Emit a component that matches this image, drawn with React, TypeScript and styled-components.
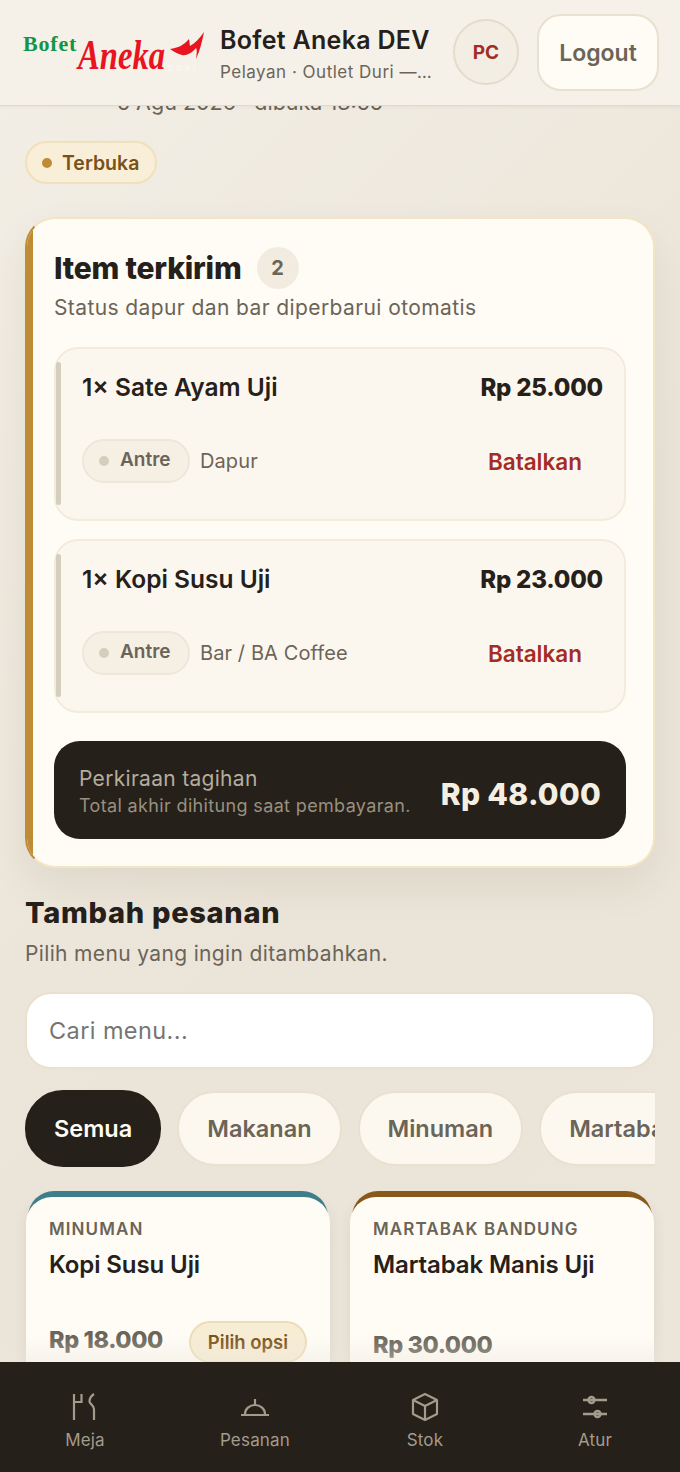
import React from "react";
import styled, { createGlobalStyle } from "styled-components";

const items = [
  { id: 1, name: "1× Sate Ayam Uji", price: "Rp 25.000", station: "Dapur" },
  { id: 2, name: "1× Kopi Susu Uji", price: "Rp 23.000", station: "Bar / BA Coffee" },
];

const filters = ["Semua", "Makanan", "Minuman", "Martabak Bandung"];

const GlobalStyle = createGlobalStyle`
  * { box-sizing: border-box; }
  html, body { margin: 0; padding: 0; }
  body { font-family: Inter, "Liberation Sans", sans-serif; color: #26201a; }
`;

function Logo() {
  return (
    <LogoSvg viewBox="0 0 182 56" width="182" height="56">
      <text x="1" y="23" fontFamily="Liberation Serif" fontWeight="700" fontSize="22" letterSpacing="0.8" fill="#149447">
        Bofet
      </text>
      <text
        transform="translate(56 41) scale(0.777 1)"
        fontFamily="Liberation Serif"
        fontStyle="italic"
        fontWeight="700"
        fontSize="42"
        fill="#e8141f"
      >
        Aneka
      </text>
      <path d="M148 21C156 20 162 17 167 11L168 18C173 15 178 10 182 4C180 14 178 22 174 31C175 24 175 22 174 20C170 25 164 28 160 27C156 26 152 24 148 21Z" fill="#e8141f" />
      <text x="146" y="43" fontFamily="Inter" fontSize="7" letterSpacing="3.5" fill="#fbfaf6">
        DURI
      </text>
    </LogoSvg>
  );
}

function MejaIcon() {
  return (
    <svg viewBox="0 0 26 28" width="26" height="28" fill="none" stroke="currentColor" strokeWidth="2.2">
      <path d="M2 1v26M2 9h7.5V1" />
      <path d="M22 1c-3 2-4.500 5-4.500 7.500S22 12 22 16v11" />
    </svg>
  );
}

function PesananIcon() {
  return (
    <svg viewBox="0 0 30 20" width="30" height="20" fill="none" stroke="currentColor" strokeWidth="2.2">
      <path d="M1 18h28M5 17c0-5 4.500-9 10-9s10 4 10 9" />
      <path d="M15 2v6" />
    </svg>
  );
}

function StokIcon() {
  return (
    <svg viewBox="0 0 30 30" width="30" height="30" fill="none" stroke="currentColor" strokeWidth="2.2" strokeLinejoin="round">
      <path d="M15 2l12 6v14l-12 6-12-6V8z" />
      <path d="M3 8l12 6 12-6M15 14v14" />
    </svg>
  );
}

function AturIcon() {
  return (
    <svg viewBox="0 0 26 24" width="26" height="24" fill="none" stroke="currentColor" strokeWidth="2.4">
      <path d="M1 5h24M1 19h24" />
      <circle cx="9.500" cy="5" r="3" />
      <circle cx="15.500" cy="19" r="3" />
    </svg>
  );
}

export default function App() {
  return (
    <Screen>
      <GlobalStyle />
      <Header>
        <Logo />
        <HeaderText>
          <BrandName>Bofet Aneka DEV</BrandName>
          <BrandSub>Pelayan · Outlet Duri — Jakarta</BrandSub>
        </HeaderText>
        <Avatar>PC</Avatar>
        <LogoutButton>Logout</LogoutButton>
      </Header>

      <Content>
        <OpenedAt>5 Agu 2026 · dibuka 13:55</OpenedAt>
        <StatusPill>
          <StatusDot />
          Terbuka
        </StatusPill>

        <SentCard>
          <CardTitleRow>
            <CardTitle>Item terkirim</CardTitle>
            <CountBadge>2</CountBadge>
          </CardTitleRow>
          <CardSub>Status dapur dan bar diperbarui otomatis</CardSub>

          <ItemList>
            {items.map((item) => (
              <ItemRow key={item.id}>
                <ItemTop>
                  <ItemName>{item.name}</ItemName>
                  <ItemPrice>{item.price}</ItemPrice>
                </ItemTop>
                <ItemBottom>
                  <QueuePill>
                    <QueueDot />
                    Antre
                  </QueuePill>
                  <Station>{item.station}</Station>
                  <CancelLink>Batalkan</CancelLink>
                </ItemBottom>
              </ItemRow>
            ))}
          </ItemList>

          <BillBar>
            <BillText>
              <BillLabel>Perkiraan tagihan</BillLabel>
              <BillNote>Total akhir dihitung saat pembayaran.</BillNote>
            </BillText>
            <BillTotal>Rp 48.000</BillTotal>
          </BillBar>
        </SentCard>

        <SectionTitle>Tambah pesanan</SectionTitle>
        <SectionSub>Pilih menu yang ingin ditambahkan.</SectionSub>

        <SearchInput placeholder="Cari menu..." />

        <FilterRow>
          {filters.map((f, i) => (
            <FilterChip key={f} $active={i === 0}>
              {f}
            </FilterChip>
          ))}
        </FilterRow>

        <MenuGrid>
          <MenuCard $accent="#3f7f8c">
            <MenuCategory>MINUMAN</MenuCategory>
            <MenuName>Kopi Susu Uji</MenuName>
            <MenuFoot>
              <MenuPrice>Rp 18.000</MenuPrice>
              <OptionButton>Pilih opsi</OptionButton>
            </MenuFoot>
          </MenuCard>
          <MenuCard $accent="#8a5a1c">
            <MenuCategory>MARTABAK BANDUNG</MenuCategory>
            <MenuName>Martabak Manis Uji</MenuName>
            <MenuFoot $plain>
              <MenuPrice>Rp 30.000</MenuPrice>
            </MenuFoot>
          </MenuCard>
        </MenuGrid>
      </Content>

      <BottomFade />
      <BottomNav>
        <NavItem>
          <NavIcon><MejaIcon /></NavIcon>
          Meja
        </NavItem>
        <NavItem>
          <NavIcon><PesananIcon /></NavIcon>
          Pesanan
        </NavItem>
        <NavItem>
          <NavIcon><StokIcon /></NavIcon>
          Stok
        </NavItem>
        <NavItem>
          <NavIcon><AturIcon /></NavIcon>
          Atur
        </NavItem>
      </BottomNav>
    </Screen>
  );
}

const Screen = styled.div`
  position: relative;
  width: 680px;
  height: 1472px;
  overflow: hidden;
  background: linear-gradient(135deg, #f3efe6 0%, #ebe4d8 55%, #ebe6da 100%);
`;

const Header = styled.header`
  position: absolute;
  top: 0;
  left: 0;
  right: 0;
  z-index: 5;
  height: 106px;
  padding: 14px 21px 0 22px;
  display: flex;
  align-items: flex-start;
  background: #f5f1e8;
  border-bottom: 1px solid #e0d9ca;
  box-shadow: 0 1px 4px rgba(60, 45, 20, 0.06);
`;

const LogoSvg = styled.svg`
  flex: none;
  margin-top: 14px;
`;

const HeaderText = styled.div`
  width: 235px;
  margin: 9px 0 0 16px;
  flex: none;
`;

const BrandName = styled.div`
  font-size: 25px;
  font-weight: 600;
  line-height: 34px;
  letter-spacing: 0.3px;
  color: #26201a;
  white-space: nowrap;
`;

const BrandSub = styled.div`
  width: 216px;
  margin-top: 3px;
  font-size: 17px;
  line-height: 24px;
  letter-spacing: 0.5px;
  color: #6b6458;
  white-space: nowrap;
  overflow: hidden;
  text-overflow: ellipsis;
`;

const Avatar = styled.div`
  flex: none;
  width: 66px;
  height: 66px;
  margin: 5px 0 0 -2px;
  border-radius: 50%;
  border: 2px solid #e2dccd;
  background: #f2eee4;
  color: #a32d24;
  font-size: 19px;
  font-weight: 700;
  display: flex;
  align-items: center;
  justify-content: center;
`;

const LogoutButton = styled.button`
  flex: none;
  width: 122px;
  height: 77px;
  margin-left: 18px;
  border-radius: 24px;
  border: 2px solid #e8e1d0;
  background: #fffcf5;
  color: #6b6458;
  font: 600 23px Inter, sans-serif;
`;

const Content = styled.main`
  padding: 90px 25px 0;
`;

const OpenedAt = styled.div`
  height: 26px;
  padding-left: 92px;
  font-size: 21.500px;
  line-height: 24px;
  color: #6b6458;
`;

const StatusPill = styled.div`
  margin-top: 25px;
  width: 132px;
  height: 43px;
  border-radius: 22px;
  border: 2px solid #f0e0bb;
  background: #f9efd9;
  color: #7a5216;
  font-size: 19.500px;
  font-weight: 600;
  display: flex;
  align-items: center;
  gap: 10px;
  padding-left: 15px;
`;

const StatusDot = styled.span`
  width: 10px;
  height: 10px;
  border-radius: 50%;
  background: #bf8c36;
`;

const SentCard = styled.section`
  position: relative;
  overflow: hidden;
  margin-top: 33px;
  height: 651px;
  padding: 28px 27px 0;
  border-radius: 30px;
  border: 2px solid #f3e5c4;
  border-left-color: #bf8c36;
  background: #fffcf6;
  box-shadow: 0 18px 40px rgba(70, 55, 25, 0.08);

  &::before {
    content: "";
    position: absolute;
    left: 0;
    top: 0;
    bottom: 0;
    width: 6px;
    background: #bf8c36;
  }
`;

const CardTitleRow = styled.div`
  display: flex;
  align-items: center;
  gap: 15px;
`;

const CardTitle = styled.h2`
  margin: 0;
  font-size: 30px;
  font-weight: 800;
  line-height: 42px;
  letter-spacing: -0.2px;
  color: #26201a;
`;

const CountBadge = styled.span`
  width: 42px;
  height: 42px;
  border-radius: 50%;
  background: #f2ece0;
  color: #6b6458;
  font-size: 20px;
  font-weight: 700;
  display: flex;
  align-items: center;
  justify-content: center;
`;

const CardSub = styled.p`
  margin: 5px 0 0;
  font-size: 21px;
  line-height: 28px;
  letter-spacing: 0.4px;
  color: #6b6458;
`;

const ItemList = styled.div`
  margin-top: 25px;
  display: flex;
  flex-direction: column;
  gap: 18px;
`;

const ItemRow = styled.article`
  position: relative;
  height: 174px;
  padding: 20px 21px 0 26px;
  border-radius: 24px;
  border: 2px solid #f3ecdd;
  background: #fcf7ee;

  &::before {
    content: "";
    position: absolute;
    left: 0;
    top: 13px;
    bottom: 14px;
    width: 5px;
    border-radius: 3px;
    background: #d4cfbd;
  }
`;

const ItemTop = styled.div`
  display: flex;
  justify-content: space-between;
  align-items: flex-start;
`;

const ItemName = styled.div`
  font-size: 24.500px;
  font-weight: 600;
  line-height: 36px;
  color: #26201a;
`;

const ItemPrice = styled.div`
  font-size: 24px;
  font-weight: 800;
  line-height: 37px;
  letter-spacing: -0.2px;
  color: #26201a;
`;

const ItemBottom = styled.div`
  margin-top: 33px;
  display: flex;
  align-items: center;
`;

const QueuePill = styled.div`
  width: 108px;
  height: 44px;
  border-radius: 22px;
  border: 2px solid #ede7d9;
  background: #f6f0e4;
  color: #6b6458;
  font-size: 19px;
  font-weight: 600;
  display: flex;
  align-items: center;
  gap: 11px;
  padding: 0 0 4px 15px;
`;

const QueueDot = styled.span`
  width: 10px;
  height: 10px;
  margin-top: 4px;
  border-radius: 50%;
  background: #d4cfbd;
`;

const Station = styled.span`
  margin-left: 10px;
  font-size: 20px;
  letter-spacing: 0.1px;
  color: #6b6458;
`;

const CancelLink = styled.button`
  margin: 0 21px 0 auto;
  padding: 0;
  border: none;
  background: none;
  color: #a32d24;
  font: 600 22.500px Inter, sans-serif;
`;

const BillBar = styled.div`
  margin-top: 28px;
  height: 98px;
  padding: 0 25px;
  border-radius: 26px;
  background: #26201a;
  display: flex;
  align-items: center;
  justify-content: space-between;
`;

const BillText = styled.div`
  padding-top: 5px;
`;

const BillLabel = styled.div`
  font-size: 21px;
  line-height: 26px;
  letter-spacing: 0.3px;
  color: #b5ad9c;
`;

const BillNote = styled.div`
  font-size: 18px;
  line-height: 27px;
  letter-spacing: 0.35px;
  color: #98907f;
`;

const BillTotal = styled.div`
  padding-top: 8px;
  font-size: 30px;
  font-weight: 800;
  letter-spacing: 0.3px;
  color: #f5efe2;
`;

const SectionTitle = styled.h2`
  margin: 25px 0 0;
  font-size: 29px;
  font-weight: 800;
  line-height: 40px;
  letter-spacing: 0.7px;
  color: #26201a;
`;

const SectionSub = styled.p`
  margin: 7px 0 0;
  font-size: 21px;
  line-height: 28px;
  letter-spacing: 0.35px;
  color: #6b6458;
`;

const SearchInput = styled.input`
  display: block;
  margin-top: 24px;
  width: 100%;
  height: 77px;
  padding: 0 22px;
  border-radius: 26px;
  border: 2px solid #e8e1d0;
  background: #ffffff;
  font: 400 23.500px Inter, sans-serif;
  letter-spacing: 0.4px;
  outline: none;

  &::placeholder {
    color: #757575;
    opacity: 1;
  }
`;

const FilterRow = styled.div`
  margin-top: 20px;
  display: flex;
  gap: 16px;
  overflow: hidden;
  height: 78px;
  align-items: center;
`;

const FilterChip = styled.div<{ $active?: boolean }>`
  flex: none;
  height: ${(p) => (p.$active ? "77px" : "75px")};
  padding: 0 ${(p) => (p.$active ? "27px" : "28px")};
  border-radius: 38px;
  border: 2px solid ${(p) => (p.$active ? "#26201a" : "#e8e1d0")};
  background: ${(p) => (p.$active ? "#26201a" : "#fcf8ef")};
  color: ${(p) => (p.$active ? "#fffcf5" : "#6b6458")};
  font-size: 23.500px;
  font-weight: 600;
  display: flex;
  align-items: center;
`;

const MenuGrid = styled.div`
  isolation: isolate;
  margin: 30px 0 0 1px;
  display: grid;
  grid-template-columns: 304px 304px;
  gap: 20px;
`;

const MenuCard = styled.article<{ $accent: string }>`
  position: relative;
  height: 240px;
  padding: 21px 23px 0;
  border-radius: 26px;
  background: #fffcf6;
  box-shadow: 0 4px 14px rgba(70, 55, 25, 0.08);

  &::before {
    content: "";
    position: absolute;
    z-index: -1;
    top: -6px;
    left: 2px;
    right: 2px;
    height: 40px;
    border-radius: 26px 26px 0 0;
    background: ${(p) => p.$accent};
  }
`;

const MenuCategory = styled.div`
  font-size: 17px;
  font-weight: 600;
  line-height: 22px;
  letter-spacing: 1.100px;
  color: #6b6458;
`;

const MenuName = styled.div`
  margin-top: 8px;
  font-size: 24px;
  font-weight: 600;
  line-height: 34px;
  letter-spacing: -0.1px;
  color: #26201a;
`;

const MenuFoot = styled.div<{ $plain?: boolean }>`
  margin-top: ${(p) => (p.$plain ? "43px" : "38px")};
  display: flex;
  align-items: center;
  justify-content: space-between;
`;

const MenuPrice = styled.div`
  padding-bottom: 3px;
  font-size: 23.500px;
  font-weight: 800;
  line-height: 40px;
  letter-spacing: -0.4px;
  color: #6b6458;
`;

const OptionButton = styled.div`
  width: 118px;
  height: 42px;
  border-radius: 22px;
  border: 2px solid #ecdcb8;
  background: #f7ecd4;
  color: #7a5216;
  font-size: 18.500px;
  font-weight: 600;
  display: flex;
  align-items: center;
  justify-content: center;
`;

const BottomFade = styled.div`
  position: absolute;
  left: 0;
  right: 0;
  bottom: 110px;
  height: 26px;
  z-index: 4;
  background: linear-gradient(to bottom, rgba(235, 230, 218, 0), rgba(235, 230, 218, 0.4));
`;

const BottomNav = styled.nav`
  position: absolute;
  left: 0;
  right: 0;
  bottom: 0;
  z-index: 6;
  height: 110px;
  background: #26201a;
  display: grid;
  grid-template-columns: repeat(4, 1fr);
`;

const NavItem = styled.div`
  height: 90px;
  padding-top: 4px;
  display: flex;
  flex-direction: column;
  align-items: center;
  justify-content: flex-end;
  gap: 6px;
  color: #a39b8b;
  font-size: 17px;
  line-height: 24px;
  letter-spacing: 0.2px;
`;

const NavIcon = styled.span`
  height: 30px;
  display: flex;
  align-items: center;
  justify-content: center;
`;
